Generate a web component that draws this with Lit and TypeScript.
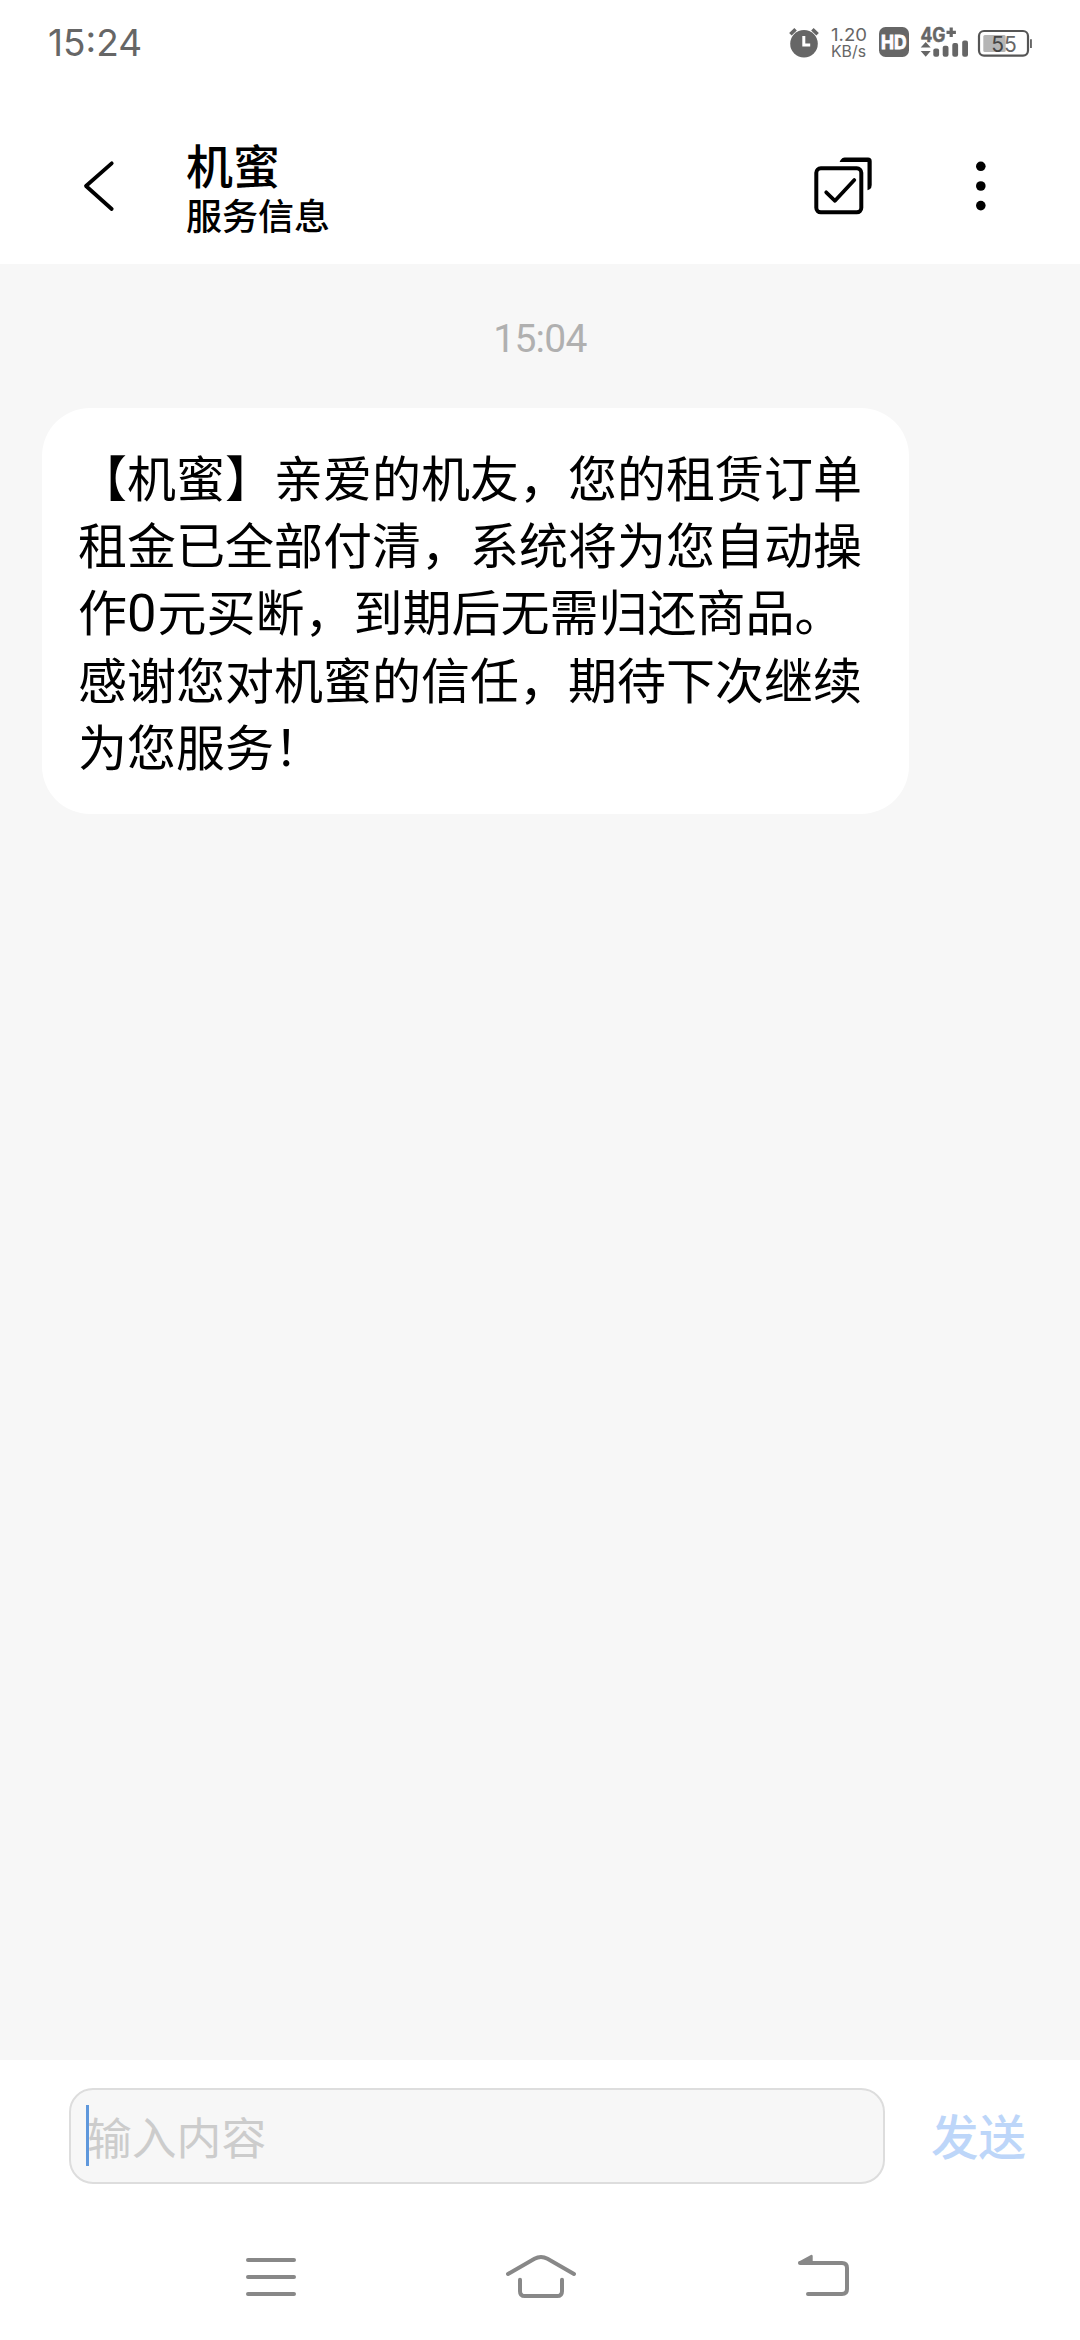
import { LitElement, html, css } from "lit";
import { customElement, property } from "lit/decorators.js";

@customElement("status-bar")
class StatusBar extends LitElement {
  @property() time = "";

  static styles = css`
    :host {
      display: flex;
      align-items: center;
      justify-content: space-between;
      height: 86px;
      padding: 0 46px 0 48px;
      box-sizing: border-box;
      color: #666;
      font-family: Inter, "Noto Sans", sans-serif;
    }
    .time { font-size: 37px; line-height: 86px; }
    svg { display: block; }
    .icons { display: flex; align-items: center; height: 86px; }
    .rate { font-size: 17.5px; }
    .unit { font-size: 15.8px; }
    .bold { font-weight: 700; }
  `;

  render() {
    return html`
      <span class="time">${this.time}</span>
      <div class="icons">
        <svg width="246" height="86" viewBox="788 0 246 86" fill="#666">
          <g>
            <circle cx="804" cy="43.7" r="13.8" />
            <path d="M790.4 34.2l5.2-5M817.6 34.2l-5.2-5" stroke="#666" stroke-width="3.6" />
            <path d="M803.8 36v9h6.4" fill="none" stroke="#fff" stroke-width="3" />
          </g>
          <text class="rate" x="831" y="41" textLength="36" lengthAdjust="spacingAndGlyphs">1.20</text>
          <text class="unit" x="831" y="56.7" textLength="35" lengthAdjust="spacingAndGlyphs">KB/s</text>
          <rect x="879" y="27" width="30" height="30" rx="6.5" />
          <text class="bold" x="881" y="49.2" font-size="18.2" fill="#fff" stroke="#fff" stroke-width=".9" textLength="25.5" lengthAdjust="spacingAndGlyphs">HD</text>
          <text class="bold" x="920.5" y="41.5" font-size="19.5" stroke="#666" stroke-width=".5" textLength="25" lengthAdjust="spacingAndGlyphs">4G</text>
          <path d="M946.5 32.3h9.4M951.2 27.6v9.4" stroke="#666" stroke-width="3.2" />
          <path d="M925.7 42l5 5.6h-10zM925.7 56.8l5-5.8h-10z" />
          <rect x="933.3" y="48.5" width="5.8" height="8.2" rx="2" />
          <rect x="942.7" y="45.7" width="5.8" height="11" rx="2" />
          <rect x="952.3" y="43" width="5.8" height="13.7" rx="2" />
          <rect x="962.2" y="40.5" width="5.8" height="16.2" rx="2" />
          <rect x="979" y="31" width="49" height="24.6" rx="5" fill="none" stroke="#555" stroke-width="2.2" />
          <rect x="983.3" y="35" width="22.4" height="17" rx="1.5" fill="#b5b5b5" />
          <path d="M1030 39.3h1.9v8.7h-1.9z" />
          <text x="991.3" y="51.7" font-size="21" fill="#444" textLength="12.8" lengthAdjust="spacingAndGlyphs">5</text>
          <text x="1004" y="51.7" font-size="21" textLength="12.8" lengthAdjust="spacingAndGlyphs">5</text>
        </svg>
      </div>
    `;
  }
}

@customElement("chat-header")
class ChatHeader extends LitElement {
  @property() name = "";
  @property() subtitle = "";

  static styles = css`
    :host {
      display: flex;
      align-items: center;
      height: 178px;
      padding: 22px 91px 0 76px;
      box-sizing: border-box;
      color: #000;
    }
    svg { display: block; flex: none; }
    .titles { flex: 1; padding-left: 66px; }
    .name { font-size: 47px; line-height: 56px; font-weight: 500; }
    .subtitle { font-size: 36px; line-height: 44px; font-weight: 500; }
    .actions { display: flex; align-items: center; gap: 97px; }
  `;

  render() {
    return html`
      <svg width="44" height="60" viewBox="76 156 44 60" fill="none" stroke="#000" stroke-width="3.8" stroke-linecap="round" stroke-linejoin="round">
        <path d="M111.7 163.3L86 186l25.7 23" />
      </svg>
      <div class="titles">
        <div class="name">${this.name}</div>
        <div class="subtitle">${this.subtitle}</div>
      </div>
      <div class="actions">
        <svg width="64" height="64" viewBox="812 154 64 64" fill="none" stroke="#000" stroke-linecap="round" stroke-linejoin="round">
          <rect x="816.3" y="168.3" width="45" height="44" rx="4.5" stroke-width="4" />
          <path d="M826.2 192.3l8.8 8.5 19.3-20.8" stroke-width="3.7" />
          <path d="M839.6 162l1-2q1.8-2.4 4-2.4h23.4q3.7 0 3.7 3.7v23.6q0 3-2 4.3l-2.2 1.1V162z" fill="#000" stroke="none" />
        </svg>
        <svg width="16" height="60" viewBox="973 156 16 60" fill="#000">
          <circle cx="980.8" cy="166.3" r="4.8" />
          <circle cx="980.8" cy="186" r="4.8" />
          <circle cx="980.8" cy="205.6" r="4.8" />
        </svg>
      </div>
    `;
  }
}

@customElement("chat-composer")
class ChatComposer extends LitElement {
  static styles = css`
    :host {
      display: flex;
      align-items: flex-start;
      height: 154px;
      padding: 28px 54px 0 69px;
      box-sizing: border-box;
      background: #fff;
    }
    .field {
      position: relative;
      width: 816px;
      height: 96px;
      box-sizing: border-box;
      border: 2px solid #ddd;
      border-radius: 24px;
      background: #f7f7f7;
      overflow: hidden;
    }
    .input {
      display: block;
      width: 100%;
      height: 100%;
      box-sizing: border-box;
      border: 0;
      outline: 0;
      padding: 0 16px 2px;
      background: transparent;
      font: inherit;
      font-size: 44.8px;
    }
    .input::placeholder { color: #ccc; opacity: 1; }
    .caret {
      position: absolute;
      left: 15px;
      top: 15px;
      width: 3px;
      height: 61px;
      background: #5f98dc;
    }
    .send {
      border: 0;
      padding: 0 0 3px;
      margin-left: 46px;
      height: 96px;
      background: none;
      font: inherit;
      font-size: 47.5px;
      font-weight: 500;
      color: #bdd6f9;
    }
  `;

  render() {
    return html`
      <div class="field">
        <input class="input" placeholder="输入内容" />
        <span class="caret"></span>
      </div>
      <button class="send">发送</button>
    `;
  }
}

@customElement("nav-keys")
class NavKeys extends LitElement {
  static styles = css`
    :host {
      display: flex;
      justify-content: space-between;
      height: 126px;
      padding: 34px 226px 0 242px;
      box-sizing: border-box;
      background: #fff;
    }
    svg { display: block; fill: none; stroke: #888; stroke-width: 4; stroke-linecap: round; stroke-linejoin: round; }
  `;

  render() {
    return html`
      <svg width="58" height="56" viewBox="242 2248 58 56">
        <path d="M248 2260h46M248 2277h46M248 2294h46" />
      </svg>
      <svg width="88" height="56" viewBox="504 2248 88 56">
        <path d="M508 2274l26.5-15.3q6.5-3.6 13 0L574 2274" />
        <path d="M520 2279.8v11.4q0 4.8 4.8 4.8h32.4q4.8 0 4.8-4.8v-11.4" />
      </svg>
      <svg width="58" height="56" viewBox="796 2248 58 56">
        <path d="M800 2263h42q5 0 5 5v21q0 5-5 5h-34" />
        <path d="M799.5 2262.6l12-6.6v7z" fill="#888" stroke-width="2.4" />
      </svg>
    `;
  }
}

@customElement("app-root")
class AppRoot extends LitElement {
  static styles = css`
    :host {
      display: flex;
      flex-direction: column;
      width: 1080px;
      height: 2340px;
      background: #fff;
      color: #000;
      font-family: "Noto Sans CJK SC", sans-serif;
      overflow: hidden;
    }
    .chat { flex: 1; padding: 53px 42px 0; background: #f7f7f7; }
    .stamp {
      height: 91px;
      line-height: 44px;
      text-align: center;
      color: #b0b0b0;
      font-family: Roboto, sans-serif;
      font-size: 39px;
      letter-spacing: -0.7px;
    }
    .bubble {
      width: 867px;
      height: 406px;
      box-sizing: border-box;
      padding: 34px 36px;
      border-radius: 48px;
      background: #fff;
      font-size: 49px;
      line-height: 67.2px;
      text-spacing-trim: space-all;
      white-space: nowrap;
    }
    .digit { font-family: Roboto, sans-serif; font-size: 52.5px; line-height: 1; letter-spacing: 1px; }
  `;

  render() {
    return html`
      <status-bar time="15:24"></status-bar>
      <chat-header name="机蜜" subtitle="服务信息"></chat-header>
      <main class="chat">
        <div class="stamp">15:04</div>
        <div class="bubble">
          【机蜜】亲爱的机友，您的租赁订单<br />租金已全部付清，系统将为您自动操<br />作<span class="digit">0</span>元买断，到期后无需归还商品。<br />感谢您对机蜜的信任，期待下次继续<br />为您服务！
        </div>
      </main>
      <chat-composer></chat-composer>
      <nav-keys></nav-keys>
    `;
  }
}
